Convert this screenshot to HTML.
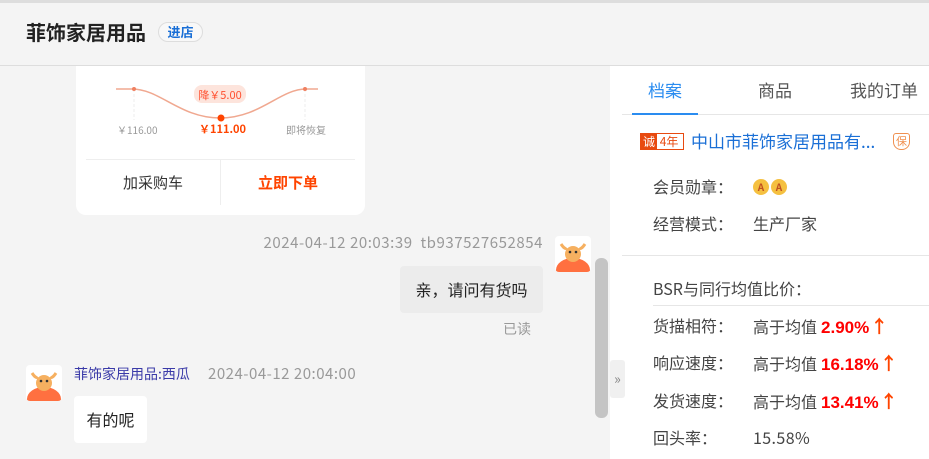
<!DOCTYPE html><html><head><meta charset="utf-8"><style>
*{margin:0;padding:0;box-sizing:border-box}
body{width:929px;height:459px;overflow:hidden;background:#f4f4f4;font-family:"Noto Sans CJK SC","Liberation Sans",sans-serif;position:relative;color:#333;line-height:1.2}
.a{position:absolute;white-space:nowrap}
.av{position:absolute;width:36px;height:36px;border-radius:4px;background:#fff;overflow:hidden}
.up{color:#f40;font-weight:bold;font-size:18px;margin-left:1px}
.v{color:#f00;margin-left:4px;font-family:"Liberation Sans",sans-serif;font-size:17px}
</style></head><body>
<div class="a" style="left:0;top:0;width:929px;height:3px;background:#ddd"></div>
<div class="a" style="left:0;top:65px;width:929px;height:1px;background:#ddd"></div>
<div class="a" style="left:26px;top:20px;font-size:20px;font-weight:bold;color:#222">菲饰家居用品</div>
<div class="a" style="left:158px;top:22px;width:45px;height:20px;border:1px solid #ddd;border-radius:10px;font-size:13px;color:#1a6fd6;text-align:center;line-height:18px;font-weight:bold;background:#f8f8f8">进店</div>

<div class="a" style="left:76px;top:66px;width:289px;height:149px;background:#fff;border-radius:0 0 10px 10px"></div>
<svg class="a" style="left:110px;top:80px" width="210" height="50">
<path d="M6 9 H22 C50 9 70 38 110 38 C150 38 170 9 196 9 H208" stroke="#f0a890" stroke-width="1.5" fill="none"/>
<line x1="24" y1="9" x2="24" y2="40" stroke="#eee" stroke-dasharray="3 2"/>
<line x1="195" y1="9" x2="195" y2="40" stroke="#eee" stroke-dasharray="3 2"/>
<circle cx="24" cy="9" r="2" fill="#f08060"/><circle cx="195" cy="9" r="2" fill="#f08060"/>
<circle cx="111" cy="38" r="3.5" fill="#ff4400"/>
<rect x="84" y="5" width="52" height="18" rx="8" fill="#fde4dc"/>
<text x="110" y="19" font-size="11" fill="#ff5030" text-anchor="middle" font-family="Noto Sans CJK SC,Liberation Sans">降￥5.00</text>
</svg>
<div class="a" style="left:117px;top:124px;font-size:10px;color:#999">￥116.00</div>
<div class="a" style="left:199px;top:123px;font-size:11px;color:#ff4400;font-weight:bold">￥111.00</div>
<div class="a" style="left:286px;top:124px;font-size:10px;color:#999">即将恢复</div>
<div class="a" style="left:86px;top:159px;width:269px;height:1px;background:#eee"></div>
<div class="a" style="left:220px;top:160px;width:1px;height:45px;background:#eee"></div>
<div class="a" style="left:123px;top:174px;font-size:15px;color:#333">加采购车</div>
<div class="a" style="left:258px;top:174px;font-size:15px;color:#ff4400;font-weight:bold">立即下单</div>

<div class="a" style="right:386px;top:234px;font-size:15px;letter-spacing:0.55px;color:#999">2024-04-12 20:03:39&nbsp;&nbsp;tb937527652854</div>
<div class="av" style="left:555px;top:236px"><svg width="36" height="36"><ellipse cx="18" cy="34" rx="17" ry="12" fill="#ff7040"/><ellipse cx="18" cy="18" rx="8" ry="8" fill="#f6b060"/><path d="M6 8 Q10 14 12 12 M30 8 Q26 14 24 12" stroke="#f6b060" stroke-width="3" fill="none"/><circle cx="15" cy="16" r="1.3" fill="#333"/><circle cx="21" cy="16" r="1.3" fill="#333"/></svg></div>
<div class="a" style="left:400px;top:266px;width:143px;height:47px;background:#ececec;border-radius:4px;font-size:16px;line-height:47px;text-align:center;color:#222">亲，请问有货吗</div>
<div class="a" style="left:503px;top:321px;font-size:14px;color:#999">已读</div>
<div class="a" style="left:595px;top:258px;width:13px;height:160px;background:#c4c4c4;border-radius:6px"></div>

<div class="av" style="left:26px;top:365px"><svg width="36" height="36"><ellipse cx="18" cy="34" rx="17" ry="12" fill="#ff7040"/><ellipse cx="18" cy="18" rx="8" ry="8" fill="#f6b060"/><path d="M6 8 Q10 14 12 12 M30 8 Q26 14 24 12" stroke="#f6b060" stroke-width="3" fill="none"/><circle cx="15" cy="16" r="1.3" fill="#333"/><circle cx="21" cy="16" r="1.3" fill="#333"/></svg></div>
<div class="a" style="left:74px;top:366px;font-size:14px;color:#3a3aa8">菲饰家居用品:西瓜</div>
<div class="a" style="left:208px;top:365px;font-size:15px;letter-spacing:0.5px;color:#999">2024-04-12 20:04:00</div>
<div class="a" style="left:74px;top:396px;width:73px;height:47px;background:#fff;border-radius:4px;font-size:16px;line-height:47px;text-align:center;color:#222">有的呢</div>

<div class="a" style="left:610px;top:66px;width:319px;height:393px;background:#fff"></div>
<div class="a" style="left:610px;top:360px;width:15px;height:38px;background:#f0f0f0;border-radius:3px;font-size:14px;color:#888;line-height:38px;text-align:center">»</div>
<div class="a" style="left:648px;top:80px;font-size:17px;color:#2a8cf0">档案</div>
<div class="a" style="left:758px;top:80px;font-size:17px;color:#555">商品</div>
<div class="a" style="left:850px;top:80px;font-size:17px;color:#555">我的订单</div>
<div class="a" style="left:622px;top:114px;width:307px;height:1px;background:#e6e6e6"></div>
<div class="a" style="left:632px;top:113px;width:66px;height:2px;background:#2a8cf0"></div>
<div class="a" style="left:640px;top:133px;width:44px;height:17px;border:1px solid #e84a10;font-size:12px;line-height:15px"><span style="background:#e84a10;color:#fff;display:inline-block;width:16px;text-align:center">诚</span><span style="color:#e84a10"> 4年</span></div>
<div class="a" style="left:691px;top:131px;font-size:17px;color:#1a6fd6">中山市菲饰家居用品有...</div>
<div class="a" style="left:893px;top:133px;width:17px;height:17px;border:1.5px solid #f09050;border-radius:3px 3px 8px 8px;font-size:11px;color:#f09050;text-align:center;line-height:14px">保</div>
<div class="a" style="left:653px;top:177px;font-size:16px;color:#444">会员勋章：</div>
<div class="a" style="left:753px;top:178px;font-size:13px"><span style="display:inline-block;width:16px;height:16px;border-radius:50%;background:#f5c040;color:#c05020;text-align:center;line-height:16px;font-size:10px;font-weight:bold">A</span><span style="display:inline-block;width:16px;height:16px;border-radius:50%;background:#f5c040;color:#c05020;text-align:center;line-height:16px;font-size:10px;font-weight:bold;margin-left:2px">A</span></div>
<div class="a" style="left:653px;top:214px;font-size:16px;color:#444">经营模式：</div>
<div class="a" style="left:753px;top:214px;font-size:16px;color:#444">生产厂家</div>
<div class="a" style="left:622px;top:255px;width:307px;height:1px;background:#e6e6e6"></div>
<div class="a" style="left:653px;top:279px;font-size:16px;color:#444">BSR与同行均值比价：</div>
<div class="a" style="left:653px;top:305px;width:276px;height:1px;background:#e6e6e6"></div>
<div class="a" style="left:653px;top:316px;font-size:16px;color:#444">货描相符：</div>
<div class="a" style="left:753px;top:316px;font-size:16px;color:#444">高于均值<b class="v">2.90%</b><span class="up">↑</span></div>
<div class="a" style="left:653px;top:353px;font-size:16px;color:#444">响应速度：</div>
<div class="a" style="left:753px;top:353px;font-size:16px;color:#444">高于均值<b class="v">16.18%</b><span class="up">↑</span></div>
<div class="a" style="left:653px;top:391px;font-size:16px;color:#444">发货速度：</div>
<div class="a" style="left:753px;top:391px;font-size:16px;color:#444">高于均值<b class="v">13.41%</b><span class="up">↑</span></div>
<div class="a" style="left:653px;top:428px;font-size:16px;color:#444">回头率：</div>
<div class="a" style="left:753px;top:428px;font-size:16px;letter-spacing:0.4px;color:#444">15.58%</div>
</body></html>
